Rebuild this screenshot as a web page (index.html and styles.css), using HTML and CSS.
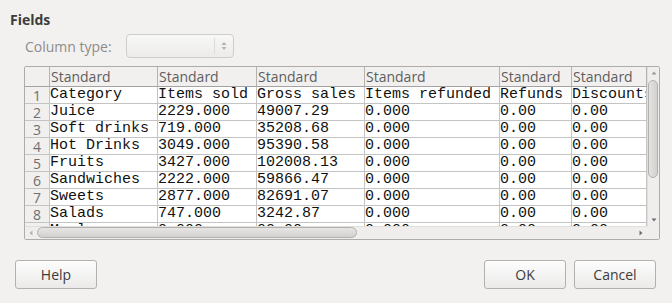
FILE: index.html
```html
<!DOCTYPE html>
<html lang="en">

<head>
    <meta charset="UTF-8">
    <meta name="viewport" content="width=device-width, initial-scale=1.0">
    <title>Fields</title>
    <link rel="stylesheet" href="styles.css">
</head>

<body>
    <div class="dialog">
        <h3 class="title">Fields</h3>

        <div class="type-row">
            <span class="label">Column type:</span>
            <div class="combo">
                <div class="combo-value"></div>
                <div class="combo-spin">
                    <svg width="6" height="12" viewBox="0 0 6 12">
                        <polygon points="3,2 5.5,5 0.5,5" fill="#b4b2b0" />
                        <polygon points="0.5,7 5.5,7 3,10" fill="#b4b2b0" />
                    </svg>
                </div>
            </div>
        </div>

        <!-- preview of the imported sheet -->
        <div class="frame">
            <div class="viewport">
                <div class="sheet">
                    <div class="corner"></div>
                    <div class="head">Standard</div>
                    <div class="head">Standard</div>
                    <div class="head">Standard</div>
                    <div class="head">Standard</div>
                    <div class="head">Standard</div>
                    <div class="head">Standard</div>

                    <div class="num">1</div>
                    <div class="cell">Category</div>
                    <div class="cell">Items sold</div>
                    <div class="cell">Gross sales</div>
                    <div class="cell">Items refunded</div>
                    <div class="cell">Refunds</div>
                    <div class="cell">Discounts</div>

                    <div class="num">2</div>
                    <div class="cell">Juice</div>
                    <div class="cell">2229.000</div>
                    <div class="cell">49007.29</div>
                    <div class="cell">0.000</div>
                    <div class="cell">0.00</div>
                    <div class="cell">0.00</div>

                    <div class="num">3</div>
                    <div class="cell">Soft drinks</div>
                    <div class="cell">719.000</div>
                    <div class="cell">35208.68</div>
                    <div class="cell">0.000</div>
                    <div class="cell">0.00</div>
                    <div class="cell">0.00</div>

                    <div class="num">4</div>
                    <div class="cell">Hot Drinks</div>
                    <div class="cell">3049.000</div>
                    <div class="cell">95390.58</div>
                    <div class="cell">0.000</div>
                    <div class="cell">0.00</div>
                    <div class="cell">0.00</div>

                    <div class="num">5</div>
                    <div class="cell">Fruits</div>
                    <div class="cell">3427.000</div>
                    <div class="cell">102008.13</div>
                    <div class="cell">0.000</div>
                    <div class="cell">0.00</div>
                    <div class="cell">0.00</div>

                    <div class="num">6</div>
                    <div class="cell">Sandwiches</div>
                    <div class="cell">2222.000</div>
                    <div class="cell">59866.47</div>
                    <div class="cell">0.000</div>
                    <div class="cell">0.00</div>
                    <div class="cell">0.00</div>

                    <div class="num">7</div>
                    <div class="cell">Sweets</div>
                    <div class="cell">2877.000</div>
                    <div class="cell">82691.07</div>
                    <div class="cell">0.000</div>
                    <div class="cell">0.00</div>
                    <div class="cell">0.00</div>

                    <div class="num">8</div>
                    <div class="cell">Salads</div>
                    <div class="cell">747.000</div>
                    <div class="cell">3242.87</div>
                    <div class="cell">0.000</div>
                    <div class="cell">0.00</div>
                    <div class="cell">0.00</div>

                    <div class="num">9</div>
                    <div class="cell">Meals</div>
                    <div class="cell">0.000</div>
                    <div class="cell">00.00</div>
                    <div class="cell">0.000</div>
                    <div class="cell">0.00</div>
                    <div class="cell">0.00</div>
                </div>
            </div>

            <div class="vscroll">
                <div class="arrow">
                    <svg width="6" height="4" viewBox="0 0 6 4"><polygon points="3,0.5 5.5,3.5 0.5,3.5" fill="#9a9896" /></svg>
                </div>
                <div class="track">
                    <div class="thumb-v"></div>
                </div>
                <div class="arrow">
                    <svg width="6" height="4" viewBox="0 0 6 4"><polygon points="0.5,0.5 5.5,0.5 3,3.5" fill="#6f6d6b" /></svg>
                </div>
            </div>

            <div class="hscroll">
                <div class="arrow">
                    <svg width="4" height="6" viewBox="0 0 4 6"><polygon points="0.5,3 3.5,0.5 3.5,5.5" fill="#b4b2b0" /></svg>
                </div>
                <div class="thumb-h"></div>
                <div class="track"></div>
                <div class="arrow">
                    <svg width="4" height="6" viewBox="0 0 4 6"><polygon points="0.5,0.5 3.5,3 0.5,5.5" fill="#6f6d6b" /></svg>
                </div>
            </div>

            <div class="scroll-corner"></div>
        </div>

        <div class="buttons">
            <button class="btn">Help</button>
            <div class="spacer"></div>
            <button class="btn">OK</button>
            <button class="btn">Cancel</button>
        </div>
    </div>
</body>

</html>
```

FILE: styles.css
```css
body {
    margin: 0;
    padding: 0;
    background-color: #f2f1f0;
    font-family: "Open Sans", "DejaVu Sans", sans-serif;
    font-size: 14px;
    color: #3c3c3c;
}

.dialog {
    width: 672px;
    height: 303px;
    overflow: hidden;
}

.title {
    margin: 11px 0 0 10px;
    height: 18px;
    line-height: 18px;
    font-size: 14px;
    font-weight: bold;
    color: #3c3c3c;
}

.type-row {
    display: flex;
    align-items: center;
    height: 24px;
    margin-top: 5px;
    padding-left: 25px;
}

.label {
    width: 101px;
    color: #8e8c8a;
}

.combo {
    display: flex;
    width: 108px;
    height: 24px;
    box-sizing: border-box;
    border: 1px solid #cfcdca;
    border-radius: 4px;
    background: linear-gradient(#f8f8f7, #ecebea);
}

.combo-value {
    flex: 1;
}

.combo-spin {
    display: flex;
    align-items: center;
    justify-content: center;
    width: 18px;
    border-left: 1px solid #dddbd8;
    margin: 3px 0;
}

.frame {
    display: grid;
    grid-template-columns: 622px 12px;
    grid-template-rows: 159px 13px;
    width: 636px;
    height: 174px;
    box-sizing: border-box;
    margin: 8px 0 0 24px;
    border: 1px solid #aeaca9;
    border-radius: 2px;
    background-color: #fff;
}

.viewport {
    overflow: hidden;
}

.sheet {
    display: grid;
    grid-template-columns: 25px 108px 99px 108px 135px 72px 75px;
    grid-template-rows: 20px;
    grid-auto-rows: 17px;
}

.sheet > div {
    box-sizing: border-box;
    border-right: 1px solid #c4c4c4;
    border-bottom: 1px solid #c4c4c4;
    white-space: nowrap;
    overflow: hidden;
}

.corner,
.head,
.num {
    background-color: #f1f0ef;
}

.sheet .corner,
.sheet .head {
    border-right-color: #b5b3b1;
    border-bottom-color: #a5a3a1;
}

.head {
    padding-left: 1px;
    line-height: 19px;
    color: #5e5e5e;
}

.num {
    padding-top: 1px;
    text-align: center;
    line-height: 15px;
    color: #6e6e6e;
}

.cell {
    font-family: "Liberation Mono", "DejaVu Sans Mono", monospace;
    font-size: 15px;
    line-height: 16px;
    color: #111;
}

.vscroll {
    display: flex;
    flex-direction: column;
    background-color: #efeeed;
    border-left: 1px solid #e0dfdd;
}

.vscroll .arrow {
    display: flex;
    align-items: center;
    justify-content: center;
    height: 12px;
}

.vscroll .track {
    flex: 1;
}

.thumb-v {
    width: 10px;
    height: 98px;
    margin-top: 1px;
    box-sizing: border-box;
    border: 1px solid #b3b1ae;
    border-radius: 5px;
    background: linear-gradient(to right, #e4e3e1, #d3d1cf);
}

.hscroll {
    display: flex;
    background-color: #efeeed;
    border-top: 1px solid #e0dfdd;
}

.hscroll .arrow {
    display: flex;
    align-items: center;
    justify-content: center;
    width: 12px;
}

.hscroll .track {
    flex: 1;
}

.thumb-h {
    width: 320px;
    height: 11px;
    box-sizing: border-box;
    border: 1px solid #b3b1ae;
    border-radius: 6px;
    background: linear-gradient(#e6e5e3, #d3d1cf);
}

.scroll-corner {
    background-color: #efeeed;
}

.buttons {
    display: flex;
    margin-top: 20px;
    padding: 0 16px 0 15px;
    gap: 8px;
}

.spacer {
    flex: 1;
}

.btn {
    width: 82px;
    height: 29px;
    border: 1px solid #b3b1ae;
    border-radius: 3px;
    background: linear-gradient(#fdfdfd, #ebeae9);
    font-family: "Open Sans", "DejaVu Sans", sans-serif;
    font-size: 14px;
    color: #3c3c3c;
}
```
